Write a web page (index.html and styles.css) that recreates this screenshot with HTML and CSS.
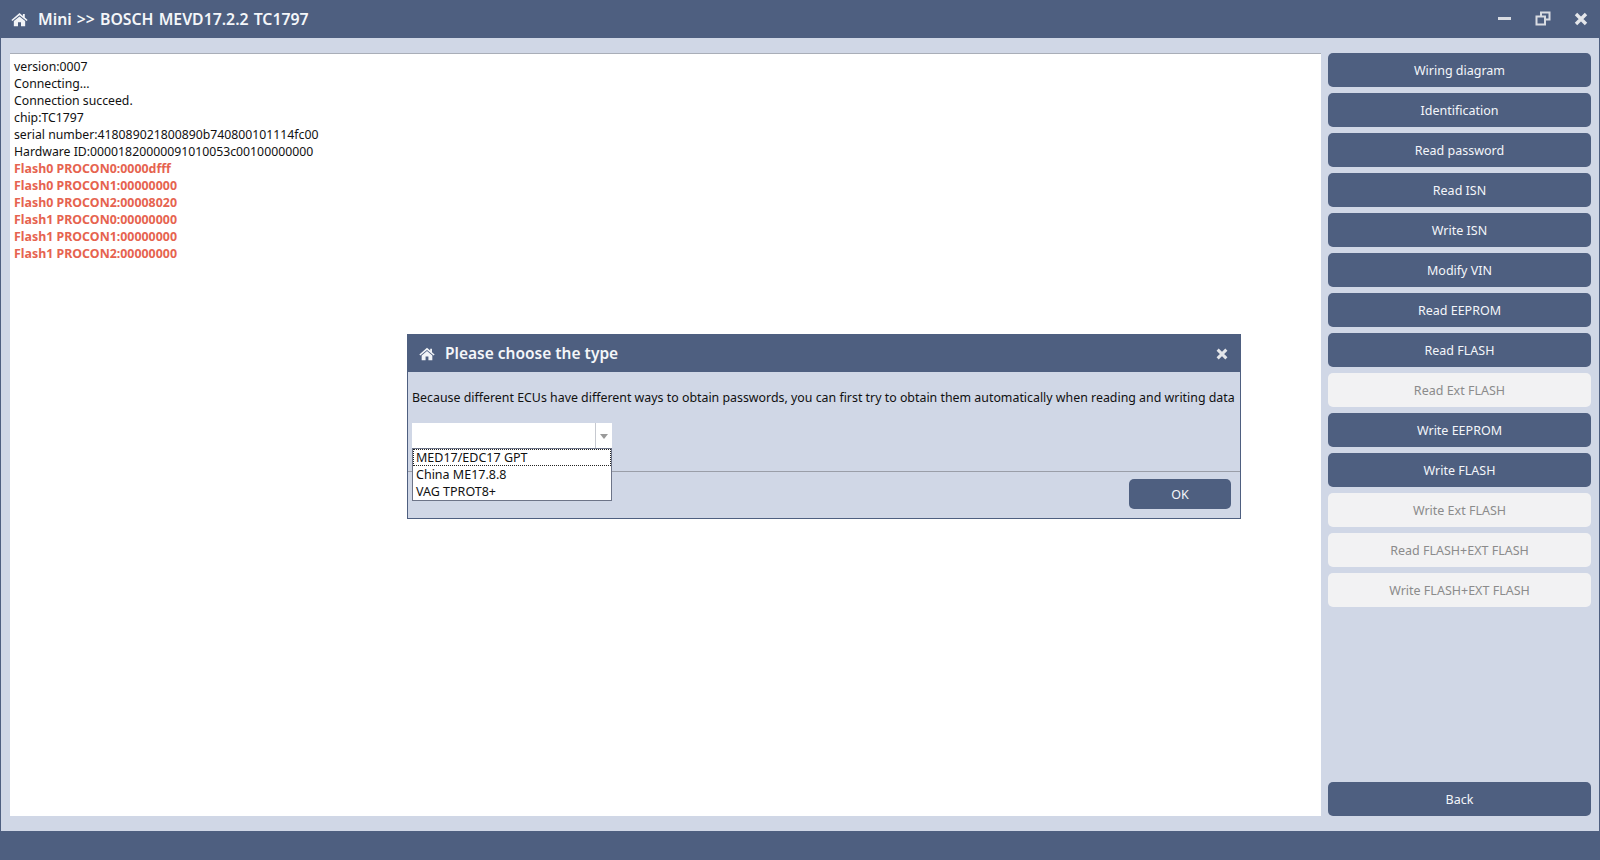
FILE: index.html
```html
<!DOCTYPE html>
<html lang="en">
<head>
<meta charset="utf-8">
<title>Mini</title>
<link rel="stylesheet" href="styles.css">
</head>
<body>
<div class="window">
  <header class="titlebar">
    <svg class="home" viewBox="0 0 18 15"><path d="M9 0.6 L12.6 3.7 V1.6 H14.6 V5.4 L17.6 8 L16.5 9.2 L9 2.9 L1.5 9.2 L0.4 8 Z M9 4.2 L15 9.2 V14.6 H10.6 V10.4 H7.4 V14.6 H3 V9.2 Z"/></svg>
    <h1 class="title">Mini &gt;&gt; BOSCH MEVD17.2.2 TC1797</h1>
    <div class="winctl">
      <svg class="ctl" viewBox="0 0 16 16"><rect x="1" y="6" width="13" height="3" fill="#d9dce2"/></svg>
      <svg class="ctl" viewBox="0 0 16 16"><path d="M6 4.5 V1.5 H14.5 V8.5 H11 M1.5 5.5 H10 V13.5 H1.5 Z" fill="none" stroke="#d9dce2" stroke-width="2"/></svg>
      <svg class="ctl" viewBox="0 0 16 16"><path d="M3 3 L13 13 M13 3 L3 13" stroke="#e4e6ea" stroke-width="3.4"/></svg>
    </div>
  </header>
  <main class="content">
    <section class="log">
      <div>version:0007</div>
      <div>Connecting...</div>
      <div>Connection succeed.</div>
      <div>chip:TC1797</div>
      <div>serial number:418089021800890b740800101114fc00</div>
      <div>Hardware ID:00001820000091010053c00100000000</div>
      <div class="warn">Flash0 PROCON0:0000dfff</div>
      <div class="warn">Flash0 PROCON1:00000000</div>
      <div class="warn">Flash0 PROCON2:00008020</div>
      <div class="warn">Flash1 PROCON0:00000000</div>
      <div class="warn">Flash1 PROCON1:00000000</div>
      <div class="warn">Flash1 PROCON2:00000000</div>
    </section>
    <aside class="actions">
      <button class="btn">Wiring diagram</button>
      <button class="btn">Identification</button>
      <button class="btn">Read password</button>
      <button class="btn">Read ISN</button>
      <button class="btn">Write ISN</button>
      <button class="btn">Modify VIN</button>
      <button class="btn">Read EEPROM</button>
      <button class="btn">Read FLASH</button>
      <button class="btn off">Read Ext FLASH</button>
      <button class="btn">Write EEPROM</button>
      <button class="btn">Write FLASH</button>
      <button class="btn off">Write Ext FLASH</button>
      <button class="btn off">Read FLASH+EXT FLASH</button>
      <button class="btn off">Write FLASH+EXT FLASH</button>
      <button class="btn back">Back</button>
    </aside>
  </main>
  <footer class="statusbar"></footer>
</div>

<div class="dialog">
  <header class="dlg-head">
    <svg class="home small" viewBox="0 0 18 15"><path d="M9 0.6 L12.6 3.7 V1.6 H14.6 V5.4 L17.6 8 L16.5 9.2 L9 2.9 L1.5 9.2 L0.4 8 Z M9 4.2 L15 9.2 V14.6 H10.6 V10.4 H7.4 V14.6 H3 V9.2 Z"/></svg>
    <h2 class="dlg-title">Please choose the type</h2>
    <svg class="dlg-close" viewBox="0 0 16 16"><path d="M3 3 L13 13 M13 3 L3 13" stroke="#e4e6ea" stroke-width="3.4"/></svg>
  </header>
  <div class="dlg-body">
    <p class="dlg-text">Because different ECUs have different ways to obtain passwords, you can first try to obtain them automatically when reading and writing data</p>
    <div class="combo">
      <div class="combo-field"></div>
      <div class="combo-arrow"><span class="tri"></span></div>
      <ul class="combo-list">
        <li class="sel">MED17/EDC17 GPT</li>
        <li>China ME17.8.8</li>
        <li>VAG TPROT8+</li>
      </ul>
    </div>
  </div>
  <div class="dlg-foot">
    <button class="btn ok">OK</button>
  </div>
</div>
</body>
</html>
```
FILE: styles.css
```css
* { box-sizing: border-box; }
html, body { margin: 0; padding: 0; }
body {
  width: 1600px;
  height: 860px;
  overflow: hidden;
  font-family: "Noto Sans", "Open Sans", sans-serif;
  font-size: 12.5px;
  color: #111;
}
.window {
  height: 860px;
  display: flex;
  flex-direction: column;
  background: #d0d7e6;
  border-right: 1px solid #4e5f80;
  border-left: 1px solid #4e5f80;
}
.titlebar {
  height: 38px;
  flex: none;
  background: #4e5f80;
  display: flex;
  align-items: center;
  padding: 0 10px 0 10px;
  color: #fff;
}
.home { width: 17px; height: 15px; fill: #f2f4f7; flex: none; }
.title {
  margin: 0 0 0 10px;
  font-size: 15.8px;
  word-spacing: 1px;
  font-weight: 600;
  color: #f4f6f9;
  white-space: nowrap;
}
.winctl { margin-left: auto; display: flex; gap: 22px; align-items: center; }
.ctl { width: 16px; height: 16px; display: block; }
.content {
  flex: 1;
  display: flex;
  gap: 7px;
  padding: 15px 8px 15px 9px;
  min-height: 0;
}
.log {
  width: 1311px;
  background: #fff;
  border-top: 1px solid #a9aeb8;
  padding: 4px 4px;
  font-size: 12.25px;
  line-height: 17px;
  white-space: nowrap;
}
.warn { color: #e6634f; font-weight: 700; font-size: 12.4px; }
.actions {
  flex: 1;
  display: flex;
  flex-direction: column;
  gap: 6px;
}
.btn {
  display: block;
  width: 100%;
  height: 34px;
  flex: none;
  border: 0;
  border-radius: 5px;
  background: #4e5f80;
  color: #f4f6fa;
  font: inherit;
  padding: 0;
  text-align: center;
}
.btn.off { background: #f2f2f3; color: #8b8b8b; }
.btn.back { margin-top: auto; }
.statusbar { height: 29px; flex: none; background: #4e5f80; }

.dialog {
  position: absolute;
  left: 407px;
  top: 334px;
  width: 834px;
  height: 185px;
  background: #d0d7e6;
  border: 1px solid #4e5f80;
  display: flex;
  flex-direction: column;
}
.dlg-head {
  height: 37px;
  flex: none;
  background: #4e5f80;
  display: flex;
  align-items: center;
  padding: 0 11px;
}
.home.small { width: 16px; height: 14px; }
.dlg-title {
  margin: -2px 0 0 10px;
  font-size: 15.5px;
  font-weight: 600;
  color: #f4f6f9;
}
.dlg-close { width: 14px; height: 14px; margin-left: auto; }
.dlg-body { flex: 1; padding: 17px 4px 0; min-height: 0; }
.dlg-text { margin: 0; font-size: 12.39px; line-height: 17px; white-space: nowrap; }
.combo {
  position: relative;
  margin-top: 17px;
  width: 200px;
  height: 25px;
  display: flex;
  background: #fff;
  z-index: 1;
}
.combo-field { flex: 1; }
.combo-arrow {
  width: 17px;
  border-left: 1px solid #c6c9d0;
  display: flex;
  align-items: center;
  justify-content: center;
}
.tri {
  width: 0;
  height: 0;
  border-left: 4.5px solid transparent;
  border-right: 4.5px solid transparent;
  border-top: 5px solid #9a9a9a;
  margin-top: 2px;
}
.combo-list {
  position: absolute;
  left: 0;
  right: 0;
  top: 100%;
  margin: 0;
  padding: 0;
  list-style: none;
  background: #fff;
  border: 1px solid #6d7488;
  white-space: nowrap;
}
.combo-list li { height: 17px; line-height: 18px; padding: 0 3px; }
.combo-list li.sel { outline: 1px dotted #222; outline-offset: -1px; }
.dlg-foot {
  height: 47px;
  flex: none;
  border-top: 1px solid #9a9ea8;
  display: flex;
  justify-content: flex-end;
  align-items: flex-start;
  padding: 7px 9px 0 0;
}
.btn.ok { width: 102px; height: 30px; }
```
